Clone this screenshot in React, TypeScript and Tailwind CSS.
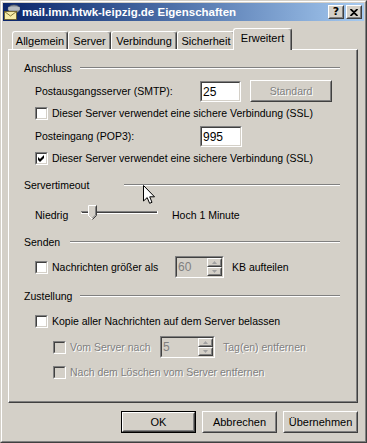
import React from "react";

function Sunken({ className, inner, children }: { className: string; inner: string; children?: React.ReactNode }) {
  return (
    <div className={`border border-t-[#808080] border-l-[#808080] border-r-white border-b-white shrink-0 ${className}`}>
      <div className={`w-full h-full border border-t-[#404040] border-l-[#404040] border-r-[#d4d0c8] border-b-[#d4d0c8] ${inner}`}>
        {children}
      </div>
    </div>
  );
}

function Raised({ className, inner, children }: { className: string; inner?: string; children?: React.ReactNode }) {
  return (
    <div className={`border border-t-white border-l-white border-r-[#404040] border-b-[#404040] bg-[#d4d0c8] shrink-0 ${className}`}>
      <div className={`w-full h-full border border-t-[#d4d0c8] border-l-[#d4d0c8] border-r-[#808080] border-b-[#808080] flex items-center justify-center ${inner ?? ""}`}>
        {children}
      </div>
    </div>
  );
}

function Checkbox({ checked, disabled }: { checked?: boolean; disabled?: boolean }) {
  return (
    <Sunken className="w-[13px] h-[13px]" inner={disabled ? "bg-[#d4d0c8]" : "bg-white"}>
      {checked && (
        <svg width="9" height="9" viewBox="0 0 9 9" className="block">
          <path d="M1 3 L3 5 L7 1 L7 4 L3 8 L1 6 Z" fill="#000" />
        </svg>
      )}
    </Sunken>
  );
}

function Header({ label, w, className }: { label: string; w: string; className: string }) {
  return (
    <div className={`flex items-center h-[14px] ${className}`}>
      <span className={`${w} shrink-0`}>{label}</span>
      <div className="flex-1 mr-[16px] h-[2px] border-t border-b border-t-[#808080] border-b-white" />
    </div>
  );
}

function Spinner({ w, value }: { w: string; value: string }) {
  return (
    <Sunken className={`${w} h-[22px]`} inner="bg-[#d4d0c8] flex">
      <span className="flex-1 pl-[1px] pt-[2px] text-[#808080] text-[12px] leading-[14px]">{value}</span>
      <div className="w-[15px] flex flex-col">
        <Raised className="w-[15px] h-[9px]" inner="">
          <svg width="5" height="3" viewBox="0 0 5 3" className="block">
            <path d="M2.5 0 L5 3 L0 3 Z" fill="#a0a0a0" />
          </svg>
        </Raised>
        <Raised className="w-[15px] h-[9px]" inner="">
          <svg width="5" height="3" viewBox="0 0 5 3" className="block">
            <path d="M0 0 L5 0 L2.5 3 Z" fill="#a0a0a0" />
          </svg>
        </Raised>
      </div>
    </Sunken>
  );
}

function Tab({ label, w }: { label: string; w: string }) {
  return (
    <div className={`${w} h-[18px] shrink-0 border-t border-l border-r border-t-white border-l-white border-r-[#404040] rounded-t-[3px] shadow-[inset_-1px_0_0_#808080] flex items-center justify-center pt-[1px] text-[11px]`}>
      {label}
    </div>
  );
}

export default function App() {
  const dis = "text-[#808080] [text-shadow:1px_1px_0_#ffffff]";
  return (
    <div className="relative w-[367px] h-[443px] bg-[#d4d0c8] border border-t-[#d4d0c8] border-l-[#d4d0c8] border-r-[#404040] border-b-[#404040] font-['Liberation_Sans',Arial,sans-serif] text-[10.5px] leading-[13px] text-black overflow-hidden">
      <div className="h-full border border-t-white border-l-white border-r-[#808080] border-b-[#808080] p-px flex flex-col">
        {/* Title bar */}
        <div className="h-[18px] shrink-0 flex items-center bg-linear-to-r from-[#0a246a] to-[#a6caf0]">
          <svg width="16" height="16" viewBox="0 0 16 16" className="ml-[1px] shrink-0">
            <ellipse cx="10" cy="5" rx="6" ry="4" fill="#9aa0a8" stroke="#505860" strokeWidth="0.8" />
            <rect x="4" y="3" width="12" height="3" fill="#c8ccd0" opacity="0.6" />
            <rect x="0.5" y="7.5" width="12" height="8" fill="#f6eca8" stroke="#6a5a20" strokeWidth="0.8" />
            <path d="M0.5 7.5 L6.5 12 L12.5 7.5" fill="none" stroke="#6a5a20" strokeWidth="0.8" />
          </svg>
          <span className="ml-[2px] text-white font-bold text-[11.5px] leading-[14px] whitespace-nowrap">
            mail.imn.htwk-leipzig.de Eigenschaften
          </span>
          <div className="ml-auto mr-[2px] flex gap-[2px]">
            <Raised className="w-[16px] h-[14px]">
              <span className="font-bold text-[11px] leading-[10px] font-['DejaVu_Sans',sans-serif]">?</span>
            </Raised>
            <Raised className="w-[16px] h-[14px]">
              <svg width="8" height="7" viewBox="0 0 8 7" className="block">
                <path d="M0.5 0 L4 3 L7.5 0 M0.5 7 L4 4 L7.5 7 M0.5 0 L7.5 7 M7.5 0 L0.5 7" stroke="#000" strokeWidth="1.6" fill="none" />
              </svg>
            </Raised>
          </div>
        </div>

        {/* Body */}
        <div className="pl-[5px] flex flex-col">
          {/* Tabs */}
          <div className="mt-[7px] h-[21px] flex items-end pl-[4px]">
            <Tab label="Allgemein" w="w-[56px]" />
            <Tab label="Server" w="w-[43px]" />
            <Tab label="Verbindung" w="w-[66px]" />
            <Tab label="Sicherheit" w="w-[58px]" />
            <div className="w-[59px] h-[22px] -mb-px -ml-[2px] relative z-10 bg-[#d4d0c8] border-t border-l border-r border-t-white border-l-white border-r-[#404040] rounded-t-[3px] shadow-[inset_-1px_0_0_#808080] flex items-center justify-center pb-[2px] text-[11px]">
              Erweitert
            </div>
          </div>

          {/* Panel */}
          <div className="w-[350px] h-[354px] border border-t-white border-l-white border-r-[#404040] border-b-[#404040]">
            <div className="h-full border-r border-b border-r-[#808080] border-b-[#808080] pt-[11px] pl-[15px] flex flex-col">
              <Header label="Anschluss" w="w-[56px]" className="" />

              <div className="flex items-center h-[22px] mt-[5px] pl-[11px]">
                <span className="w-[165px] shrink-0">Postausgangsserver (SMTP):</span>
                <Sunken className="w-[41px] h-[21px]" inner="bg-white pl-[1px] pt-[2px] text-[12px] leading-[14px]">25</Sunken>
                <Raised className="ml-[9px] w-[82px] h-[22px]">
                  <span className={dis}>Standard</span>
                </Raised>
              </div>

              <div className="flex items-center h-[14px] mt-[4px] pl-[11px]">
                <Checkbox />
                <span className="ml-[4px]">Dieser Server verwendet eine sichere Verbindung (SSL)</span>
              </div>

              <div className="flex items-center h-[22px] mt-[5px] pl-[11px]">
                <span className="w-[165px] shrink-0">Posteingang (POP3):</span>
                <Sunken className="w-[42px] h-[21px]" inner="bg-white pl-[1px] pt-[2px] text-[12px] leading-[14px]">995</Sunken>
              </div>

              <div className="flex items-center h-[14px] mt-[4px] pl-[11px]">
                <Checkbox checked />
                <span className="ml-[4px]">Dieser Server verwendet eine sichere Verbindung (SSL)</span>
              </div>

              <Header label="Servertimeout" w="w-[100px]" className="mt-[13px]" />

              <div className="flex items-center h-[22px] mt-[12px] pl-[11px]">
                <span className="w-[46px] shrink-0">Niedrig</span>
                <svg width="77" height="22" viewBox="0 0 77 22" className="shrink-0">
                  <rect x="0" y="7" width="77" height="1" fill="#808080" />
                  <rect x="1" y="8" width="75" height="1" fill="#404040" />
                  <rect x="0" y="9" width="77" height="1" fill="#ffffff" />
                  <rect x="76" y="7" width="1" height="3" fill="#ffffff" />
                  <path d="M7.5 1.5 L15.5 1.5 L15.5 11.5 L11.5 15.5 L7.5 11.5 Z" fill="#d4d0c8" />
                  <path d="M7.5 12 L7.5 1.5 L15 1.5" fill="none" stroke="#ffffff" strokeWidth="1" />
                  <path d="M15.5 1.5 L15.5 11.5 L11.5 15.5" fill="none" stroke="#404040" strokeWidth="1" />
                  <path d="M14.5 2.5 L14.5 11 L11.5 14" fill="none" stroke="#808080" strokeWidth="1" />
                  <path d="M7.5 11.5 L11 15" fill="none" stroke="#ffffff" strokeWidth="1" />
                </svg>
                <span className="ml-[14px]">Hoch 1 Minute</span>
              </div>

              <Header label="Senden" w="w-[46px]" className="mt-[9px]" />

              <div className="flex items-center h-[22px] mt-[7px] pl-[11px]">
                <Checkbox />
                <span className="ml-[4px] w-[123px] shrink-0">Nachrichten größer als</span>
                <Spinner w="w-[49px]" value="60" />
                <span className="ml-[8px]">KB aufteilen</span>
              </div>

              <Header label="Zustellung" w="w-[56px]" className="mt-[11px]" />

              <div className="flex items-center h-[14px] mt-[11px] pl-[11px]">
                <Checkbox />
                <span className="ml-[4px]">Kopie aller Nachrichten auf dem Server belassen</span>
              </div>

              <div className="flex items-center h-[22px] mt-[8px] pl-[29px]">
                <Checkbox disabled />
                <span className={`ml-[4px] w-[90px] shrink-0 ${dis}`}>Vom Server nach</span>
                <Spinner w="w-[55px]" value="5" />
                <span className={`ml-[8px] ${dis}`}>Tag(en) entfernen</span>
              </div>

              <div className="flex items-center h-[14px] mt-[7px] pl-[29px]">
                <Checkbox disabled />
                <span className={`ml-[4px] ${dis}`}>Nach dem Löschen vom Server entfernen</span>
              </div>
            </div>
          </div>

          {/* Buttons */}
          <div className="w-[350px] mt-[8px] flex justify-end gap-[6px] text-[11px]">
            <div className="w-[75px] h-[22px] border border-black">
              <Raised className="w-full h-full">OK</Raised>
            </div>
            <Raised className="w-[75px] h-[22px]">Abbrechen</Raised>
            <Raised className="w-[75px] h-[22px]">Übernehmen</Raised>
          </div>
        </div>
      </div>

      {/* Mouse cursor */}
      <svg width="13" height="20" viewBox="0 0 13 20" className="absolute left-[142px] top-[184px]">
        <path d="M0.5 0.5 L0.5 16 L4.2 12.6 L6.6 18.3 L9 17.3 L6.7 11.8 L11.5 11.8 Z" fill="#ffffff" stroke="#000000" strokeWidth="1" strokeLinejoin="miter" />
      </svg>
    </div>
  );
}
